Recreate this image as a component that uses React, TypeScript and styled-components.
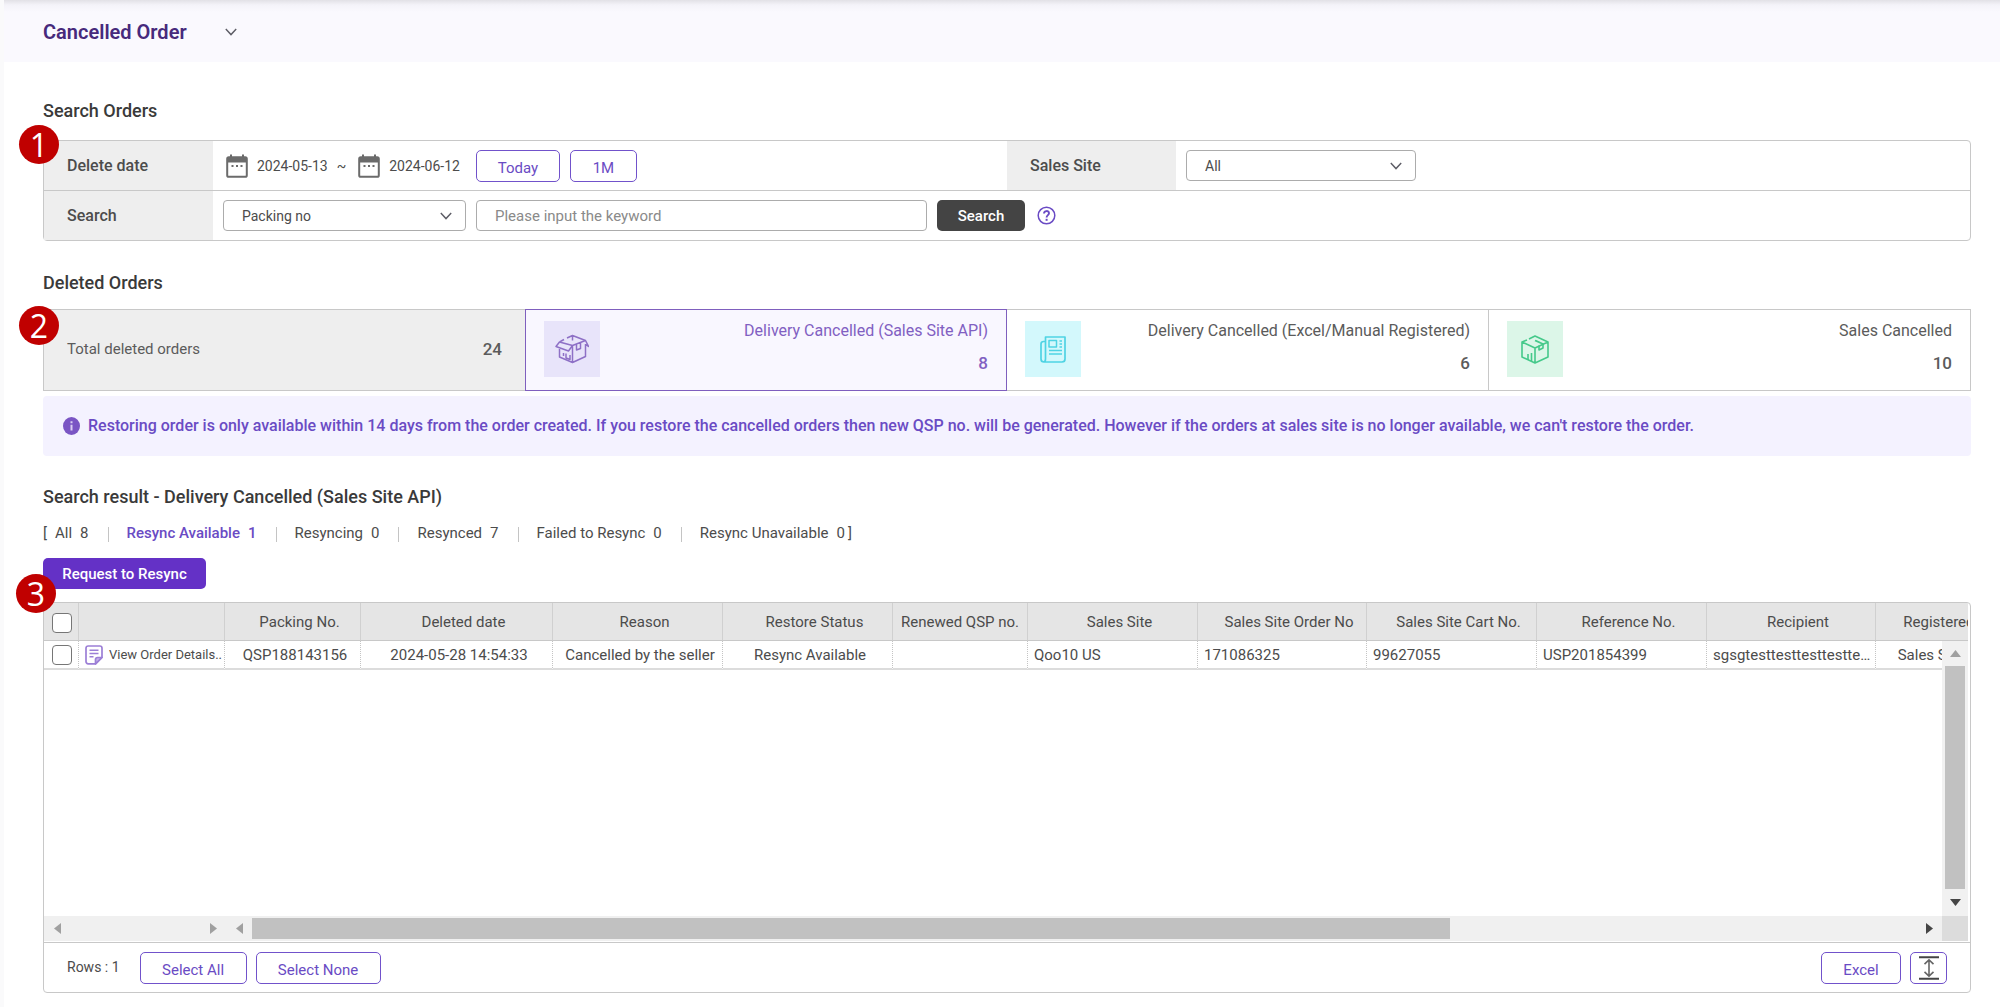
import React from 'react';
import styled, { createGlobalStyle, css } from 'styled-components';

const color = {
  purple: '#6a4bc4',
  purpleDark: '#6431c6',
  text: '#4c4c4c',
  heading: '#3a3a3a',
  line: '#c8c8c8',
  label: '#eeeeee',
};

const GlobalStyle = createGlobalStyle`
  *, *::before, *::after { box-sizing: border-box; }
  body { margin: 0; background: #fff; }
  body, button, input, select { font-family: Roboto, "Liberation Sans", sans-serif; }
  h1, h2, p { margin: 0; }
  svg { flex: none; }
`;

const Page = styled.div`
  min-height: 100vh;
  border-left: 4px solid #fafafb;
  color: ${color.text};
  font-size: 15px;
  line-height: 20px;
`;

const Header = styled.header`
  display: flex;
  align-items: center;
  gap: 36px;
  height: 62px;
  padding: 2px 39px 0;
  background: linear-gradient(#e2e1e6, #f4f3f9 5px, #faf9fe 12px);
`;

const Title = styled.h1`
  color: #472a7c;
  font-size: 20px;
  font-weight: 600;
  line-height: 28px;
`;

const PlainButton = styled.button`
  display: flex;
  padding: 0 2px;
  border: 0;
  background: none;
  color: ${color.purple};
`;

const Main = styled.main`
  padding: 0 29px 0 39px;
`;

const Section = styled.section<{ $gap: number }>`
  padding-top: ${(p) => p.$gap}px;
`;

const SectionTitle = styled.h2`
  color: ${color.heading};
  font-size: 18px;
  font-weight: 500;
  line-height: 24px;
`;

const Panel = styled.div<{ $gap: number }>`
  position: relative;
  margin-top: ${(p) => p.$gap}px;
  border: 1px solid ${color.line};
  border-radius: 4px;
`;

const StepBadge = styled.span<{ $left: number; $top: number }>`
  position: absolute;
  z-index: 2;
  left: ${(p) => p.$left}px;
  top: ${(p) => p.$top}px;
  display: grid;
  place-items: center;
  width: 40px;
  height: 39px;
  border-radius: 50%;
  background: #c00000;
  color: #fff;
  font: 400 32px/40px "Open Sans", "Noto Sans", sans-serif;
`;

const FilterRow = styled.div`
  display: grid;
  grid-template-columns: 169px 1fr;
  min-height: 49px;
`;

const FilterSplit = styled.div`
  display: grid;
  grid-template-columns: 1fr 1fr;
  border-bottom: 1px solid ${color.line};
`;

const FilterLabel = styled.label`
  display: flex;
  align-items: center;
  padding-left: 23px;
  background: ${color.label};
  font-size: 16px;
  font-weight: 500;
`;

const FilterField = styled.div<{ $wide?: boolean }>`
  display: flex;
  align-items: center;
  gap: 10px;
  padding-left: ${(p) => (p.$wide ? 13 : 10)}px;
`;

const DateGroup = styled.div`
  display: flex;
  align-items: center;
  gap: 9px;
  padding-right: 2px;
  font-size: 14px;
  &:last-of-type { padding-right: 6px; }
`;

const field = css`
  height: 31px;
  border: 1px solid #acacac;
  border-radius: 4px;
  background: #fff;
  color: ${color.text};
`;

const SelectWrap = styled.div<{ $width: number }>`
  display: grid;
  grid-template-columns: 1fr;
  align-items: center;
  width: ${(p) => p.$width}px;
  & > * { grid-area: 1 / 1; }
  & > svg { justify-self: end; margin-right: 14px; pointer-events: none; }
`;

const Select = styled.select`
  ${field}
  width: 100%;
  padding: 0 32px 0 18px;
  font-size: 14px;
  appearance: none;
`;

const TextInput = styled.input`
  ${field}
  width: 451px;
  padding: 0 18px;
  font-size: 15px;
  &::placeholder { color: #8a8a8a; opacity: 1; }
`;

const OutlineButton = styled.button<{ $width: number }>`
  display: grid;
  place-items: center;
  width: ${(p) => p.$width}px;
  height: 32px;
  padding: 4px 0 0;
  border: 1px solid #7152cb;
  border-radius: 5px;
  background: #fff;
  color: ${color.purple};
  font-size: 15px;
  line-height: 20px;
`;

const IconButton = styled(OutlineButton)`
  padding: 0;
  color: #4a4a4a;
`;

const SolidButton = styled.button<{ $width: number; $dark?: boolean }>`
  display: block;
  width: ${(p) => p.$width}px;
  height: 31px;
  padding: 0;
  border: 0;
  border-radius: 5px;
  background: ${(p) => (p.$dark ? '#444444' : color.purpleDark)};
  color: #fff;
  font-size: 15px;
  font-weight: 500;
`;

const Cards = styled.div`
  position: relative;
  display: grid;
  grid-template-columns: repeat(4, 1fr);
  margin-top: 14px;
`;

const Card = styled.button<{ $state?: 'total' | 'active' }>`
  display: flex;
  align-items: ${(p) => (p.$state === 'total' ? 'center' : 'stretch')};
  justify-content: space-between;
  height: 82px;
  padding: ${(p) => (p.$state === 'total' ? '0 23px 2px' : '11px 18px')};
  border: 1px solid ${(p) => (p.$state === 'active' ? '#7f5fbe' : color.line)};
  border-left-width: ${(p) => (p.$state ? 1 : 0)}px;
  border-right-width: ${(p) => (p.$state === 'total' ? 0 : 1)}px;
  background: ${(p) => (p.$state === 'total' ? color.label : p.$state === 'active' ? '#f9f7ff' : '#fff')};
  color: ${(p) => (p.$state === 'active' ? '#8160c2' : '#5b5b5b')};
  font-size: ${(p) => (p.$state === 'total' ? 15 : 16)}px;
  line-height: 20px;
`;

const CardTile = styled.span<{ $bg: string }>`
  display: grid;
  place-items: center;
  width: 56px;
  height: 56px;
  background: ${(p) => p.$bg};
`;

const CardText = styled.span`
  display: flex;
  flex-direction: column;
  align-items: flex-end;
  gap: 12px;
`;

const CardCount = styled.strong`
  font-size: 17px;
  font-weight: 500;
  line-height: 20px;
`;

const Notice = styled.p`
  display: flex;
  align-items: center;
  gap: 8px;
  min-height: 60px;
  margin-top: 5px;
  padding: 0 20px;
  border-radius: 4px;
  background: #f4f2ff;
  color: ${color.purple};
  font-size: 16px;
  font-weight: 500;
`;

const StatusTabs = styled.nav`
  display: flex;
  align-items: center;
  margin: 14px 0 15px;
`;

const StatusTab = styled.button<{ $active?: boolean }>`
  display: flex;
  gap: 8px;
  padding: 0;
  border: 0;
  background: none;
  color: ${(p) => (p.$active ? color.purple : color.text)};
  font-size: 15px;
  font-weight: ${(p) => (p.$active ? 500 : 400)};
  line-height: 20px;
`;

const Bracket = styled.span<{ $open?: boolean }>`
  padding: ${(p) => (p.$open ? '0 8px 0 0' : '0 0 0 3px')};
`;

const Divider = styled.span`
  width: 1px;
  height: 15px;
  margin: 2px 18px 0 19px;
  background: #c4c4c4;
`;

const GridView = styled.div`
  position: relative;
  height: 313px;
  margin-right: 2px;
  overflow: hidden;
`;

const Table = styled.table`
  width: 1990px;
  border-collapse: separate;
  border-spacing: 0;
  table-layout: fixed;
`;

const HeadCell = styled.th<{ $tight?: boolean }>`
  height: 38px;
  padding: 0 0 0 ${(p) => (p.$tight ? 0 : 14)}px;
  border-right: 1px solid #d0d0d0;
  border-bottom: 1px solid ${color.line};
  background: #e5e5e5;
  font-size: 15px;
  font-weight: 400;
  white-space: nowrap;
`;

const Cell = styled.td<{ $left?: boolean }>`
  height: 29px;
  padding: 0 1px 0 6px;
  border-right: 1px dotted #c4c4c4;
  border-bottom: 2px solid #dcdcdc;
  overflow: hidden;
  font-size: 15px;
  text-align: ${(p) => (p.$left ? 'left' : 'center')};
  text-overflow: ellipsis;
  white-space: nowrap;
`;

const DetailsLink = styled.a`
  display: flex;
  align-items: center;
  gap: 6px;
  color: ${color.text};
  font-size: 13px;
  text-decoration: none;
`;

const Check = styled.input`
  display: block;
  width: 20px;
  height: 20px;
  margin: 0 0 0 2px;
  border: 1px solid #767676;
  border-radius: 4px;
  background: #fff;
  appearance: none;
`;

const HeadCheck = styled(Check)`
  margin: 3px 0 0 8px;
`;

const VerticalBar = styled.div`
  position: absolute;
  top: 38px;
  right: 0;
  bottom: 0;
  display: flex;
  flex-direction: column;
  align-items: center;
  width: 26px;
  background: #f1f1f1;
`;

const ScrollButton = styled.button<{ $size: number }>`
  display: grid;
  flex: none;
  place-items: center;
  width: 26px;
  height: ${(p) => p.$size}px;
  padding: 0;
  border: 0;
  background: none;
`;

const VerticalThumb = styled.div`
  flex: 1;
  width: 20px;
  background: #c1c1c1;
`;

const HorizontalBars = styled.div`
  display: flex;
  align-items: center;
  height: 25px;
  margin-right: 2px;
  background: #f0f0f0;
`;

const FixedBar = styled.div`
  display: flex;
  flex: none;
  justify-content: space-between;
  width: 182px;
`;

const Track = styled.div`
  flex: 1;
`;

const HorizontalThumb = styled.div`
  width: 72%;
  height: 21px;
  background: #c1c1c1;
`;

const Corner = styled.div`
  width: 26px;
  height: 25px;
  background: #dcdcdc;
`;

const GridFooter = styled.footer`
  display: flex;
  align-items: center;
  gap: 9px;
  height: 50px;
  margin-top: 1px;
  padding: 0 23px;
  border-top: 1px solid ${color.line};
`;

const RowCount = styled.span`
  margin-right: 11px;
  padding-bottom: 2px;
  font-size: 14px;
`;

const Spacer = styled.span`
  flex: 1;
`;

const Chevron = () => (
  <svg width="12" height="8" viewBox="0 0 12 8" fill="none" stroke="#5d5d66" strokeWidth="1.4">
    <path d="M0.8 1 6 6.6 11.2 1" />
  </svg>
);

const CalendarIcon = () => (
  <svg width="22" height="24" viewBox="0 0 22 24" fill="none" stroke="#6b6b6b">
    <path d="M5 0.5v4M17 0.5v4" strokeWidth="2" />
    <rect x="1.2" y="3.2" width="19.6" height="19.6" rx="1.6" strokeWidth="2" />
    <path d="M1 4h20v4.5H1z" fill="#6b6b6b" stroke="none" />
    <path d="M5.5 12h2M10 12h2M14.5 12h2" strokeWidth="2" />
  </svg>
);

const HelpIcon = () => (
  <svg width="19" height="19" viewBox="0 0 19 19" fill="none" stroke="#6a4bc4">
    <circle cx="9.5" cy="9.5" r="8.3" strokeWidth="1.5" />
    <path d="M7 7.5c0-3.2 5-3.2 5-.2 0 1.8-2.4 1.9-2.4 4.1" strokeWidth="1.9" />
    <path d="M9.6 12.8v2" strokeWidth="2" />
  </svg>
);

const InfoIcon = () => (
  <svg width="17" height="18" viewBox="0 0 17 18">
    <ellipse cx="8.5" cy="9" rx="8.5" ry="9" fill="#7a55c4" />
    <path d="M8.5 4.2v2M8.5 7.8v5.8" stroke="#d9cdf2" strokeWidth="2" />
  </svg>
);

const OpenBoxIcon = () => (
  <svg width="34" height="30" viewBox="0 0 34 30" fill="none" stroke="#8e70c6" strokeWidth="1.5" strokeLinejoin="round">
    <path d="M4.5 15v8L17.5 28.5l13-6V10M17.5 28.5V11.5M4.5 8 1 12.5l12.5 4.5 4-5.5L4.5 8M17.5 11.5 30.5 6.5M4.5 8l4.5-2.5M12 4l5.5-2.500 13 5 3 6-3-2M17.500 1.500v5M21.500 10.500V16l4-1.500V9" />
    <path d="M11 19.500v4.500l4 1.500v-4.500M8.500 19v3" />
  </svg>
);

const NewsIcon = () => (
  <svg width="26" height="27" viewBox="0 0 26 27" fill="none" stroke="#4fd3e3" strokeWidth="1.7" strokeLinejoin="round">
    <path d="M5.5 5.5H3.5C2 5.5 1 6.5 1 8V23c0 2 1.2 3 3 3h18c1.8 0 3-1.2 3-3V1H5.5v22c0 2-1 3-2 3" />
    <path d="M9 4.5h7.5v6.5H9zM19.5 5h2.5M19.5 8h2.5M19.5 11h2.5M9 14.5h13M9 18h13" strokeWidth="1.5" />
  </svg>
);

const ClosedBoxIcon = () => (
  <svg width="28" height="29" viewBox="0 0 28 29" fill="none" stroke="#45c98a" strokeWidth="1.6" strokeLinejoin="round">
    <path d="M1 7v15l13 6 13-6V7L14 1 8 4M6 5 1 7l13 6 13-6M14 13v15" />
    <path d="M14 5.5l8 3.5M18 10.5v4.5l4-2V9L14.5 5.5M7 19v6M10.5 18v8" />
  </svg>
);

const NoteIcon = () => (
  <svg width="18" height="20" viewBox="0 0 18 20" fill="none" stroke="#9c7fd6" strokeWidth="1.7" strokeLinejoin="round">
    <path d="M10.5 18.8H3.2c-1.3 0-2.2-.9-2.2-2.2V3.2C1 1.900 1.900 1 3.200 1h11.600c1.300 0 2.200.9 2.200 2.200v9.300z" />
    <path d="M10.5 18.8v-4.200c0-1.300.8-2.100 2.100-2.100H17z" fill="#c5b2ea" />
    <path d="M4.5 5.2h9M4.5 8.5h9M4.5 11.8h4" strokeWidth="1.5" />
  </svg>
);

const HeightIcon = () => (
  <svg width="20" height="24" viewBox="0 0 20 24" fill="none" stroke="#444" strokeWidth="2">
    <path d="M0 1.2h20M0 22.8h20" />
    <path d="M10 4v16M5.5 8.2 10 3.9l4.5 4.3M5.5 15.8l4.5 4.3 4.5-4.3" strokeWidth="1.6" stroke="#666" />
  </svg>
);

const arrows = {
  up: 'M0 7 5.5 0 11 7z',
  down: 'M0 0h11L5.5 7z',
  left: 'M7 0v11L0 5.5z',
  right: 'M0 0v11l7-5.5z',
};

const Arrow = ({ dir, dark }: { dir: keyof typeof arrows; dark?: boolean }) => {
  const tall = dir === 'left' || dir === 'right';
  return (
    <svg width={tall ? 7 : 11} height={tall ? 11 : 7}>
      <path d={arrows[dir]} fill={dark ? '#454545' : '#a0a0a0'} />
    </svg>
  );
};

const columns = [
  { title: 'Packing No.', width: 136, value: 'QSP188143156' },
  { title: 'Deleted date', width: 192, value: '2024-05-28 14:54:33' },
  { title: 'Reason', width: 170, value: 'Cancelled by the seller' },
  { title: 'Restore Status', width: 170, value: 'Resync Available' },
  { title: 'Renewed QSP no.', width: 135, value: '', tight: true },
  { title: 'Sales Site', width: 170, value: 'Qoo10 US', left: true },
  { title: 'Sales Site Order No', width: 169, value: '171086325', left: true },
  { title: 'Sales Site Cart No.', width: 170, value: '99627055', left: true },
  { title: 'Reference No.', width: 170, value: 'USP201854399', left: true },
  { title: 'Recipient', width: 169, value: 'sgsgtesttesttesttesttesttest', left: true },
  { title: 'Registered by', width: 132, value: 'Sales Site API' },
];

const statuses = [
  { name: 'All', count: 8 },
  { name: 'Resync Available', count: 1 },
  { name: 'Resyncing', count: 0 },
  { name: 'Resynced', count: 7 },
  { name: 'Failed to Resync', count: 0 },
  { name: 'Resync Unavailable', count: 0 },
];

const cards = [
  { name: 'Delivery Cancelled (Sales Site API)', count: 8, bg: '#e8e4fa', icon: <OpenBoxIcon />, active: true },
  { name: 'Delivery Cancelled (Excel/Manual Registered)', count: 6, bg: '#d3f8fc', icon: <NewsIcon /> },
  { name: 'Sales Cancelled', count: 10, bg: '#dcf6e8', icon: <ClosedBoxIcon /> },
];

export default function App() {
  return (
    <Page>
      <GlobalStyle />
      <Header>
        <Title>Cancelled Order</Title>
        <PlainButton aria-label="Change menu"><Chevron /></PlainButton>
      </Header>
      <Main>
        <Section $gap={37}>
          <SectionTitle>Search Orders</SectionTitle>
          <Panel $gap={17}>
            <StepBadge $left={-25} $top={-16}>1</StepBadge>
            <FilterSplit>
              <FilterRow>
                <FilterLabel as="div">Delete date</FilterLabel>
                <FilterField $wide>
                  <DateGroup>
                    <CalendarIcon />
                    <span>2024-05-13</span>
                    <span>~</span>
                  </DateGroup>
                  <DateGroup>
                    <CalendarIcon />
                    <span>2024-06-12</span>
                  </DateGroup>
                  <OutlineButton $width={84}>Today</OutlineButton>
                  <OutlineButton $width={67}>1M</OutlineButton>
                </FilterField>
              </FilterRow>
              <FilterRow>
                <FilterLabel htmlFor="site">Sales Site</FilterLabel>
                <FilterField>
                  <SelectWrap $width={230}>
                    <Select id="site"><option>All</option></Select>
                    <Chevron />
                  </SelectWrap>
                </FilterField>
              </FilterRow>
            </FilterSplit>
            <FilterRow>
              <FilterLabel htmlFor="keyword">Search</FilterLabel>
              <FilterField>
                <SelectWrap $width={243}>
                  <Select aria-label="Search by"><option>Packing no</option></Select>
                  <Chevron />
                </SelectWrap>
                <TextInput id="keyword" placeholder="Please input the keyword" />
                <SolidButton $width={88} $dark>Search</SolidButton>
                <PlainButton aria-label="Help"><HelpIcon /></PlainButton>
              </FilterField>
            </FilterRow>
          </Panel>
        </Section>

        <Section $gap={30}>
          <SectionTitle>Deleted Orders</SectionTitle>
          <Cards>
            <StepBadge $left={-24} $top={-3}>2</StepBadge>
            <Card $state="total">
              <span>Total deleted orders</span>
              <CardCount>24</CardCount>
            </Card>
            {cards.map((c) => (
              <Card key={c.name} $state={c.active ? 'active' : undefined}>
                <CardTile $bg={c.bg}>{c.icon}</CardTile>
                <CardText>
                  <span>{c.name}</span>
                  <CardCount>{c.count}</CardCount>
                </CardText>
              </Card>
            ))}
          </Cards>
          <Notice>
            <InfoIcon />
            Restoring order is only available within 14 days from the order created. If you restore the cancelled orders then new QSP no. will be generated. However if the orders at sales site is no longer available, we can't restore the order.
          </Notice>
        </Section>

        <Section $gap={29}>
          <SectionTitle>Search result - Delivery Cancelled (Sales Site API)</SectionTitle>
          <StatusTabs>
            <Bracket $open>[</Bracket>
            {statuses.map((s, i) => (
              <React.Fragment key={s.name}>
                {i > 0 && <Divider />}
                <StatusTab $active={i === 1}>
                  <span>{s.name}</span>
                  <span>{s.count}</span>
                </StatusTab>
              </React.Fragment>
            ))}
            <Bracket>]</Bracket>
          </StatusTabs>
          <SolidButton $width={163}>Request to Resync</SolidButton>
          <Panel $gap={13}>
            <StepBadge $left={-28} $top={-29}>3</StepBadge>
            <GridView>
              <Table>
                <colgroup>
                  <col style={{ width: 35 }} />
                  <col style={{ width: 146 }} />
                  {columns.map((c) => <col key={c.title} style={{ width: c.width }} />)}
                  <col />
                </colgroup>
                <thead>
                  <tr>
                    <HeadCell $tight><HeadCheck type="checkbox" aria-label="Select all rows" /></HeadCell>
                    <HeadCell />
                    {columns.map((c) => <HeadCell key={c.title} $tight={c.tight}>{c.title}</HeadCell>)}
                    <HeadCell />
                  </tr>
                </thead>
                <tbody>
                  <tr>
                    <Cell><Check type="checkbox" aria-label="Select row" /></Cell>
                    <Cell $left>
                      <DetailsLink href="#details"><NoteIcon />View Order Details..</DetailsLink>
                    </Cell>
                    {columns.map((c) => <Cell key={c.title} $left={c.left}>{c.value}</Cell>)}
                    <Cell />
                  </tr>
                </tbody>
              </Table>
              <VerticalBar>
                <ScrollButton $size={25} aria-label="Scroll up"><Arrow dir="up" /></ScrollButton>
                <VerticalThumb />
                <ScrollButton $size={27} aria-label="Scroll down"><Arrow dir="down" dark /></ScrollButton>
              </VerticalBar>
            </GridView>
            <HorizontalBars>
              <FixedBar>
                <ScrollButton $size={25} aria-label="Scroll fixed columns left"><Arrow dir="left" /></ScrollButton>
                <ScrollButton $size={25} aria-label="Scroll fixed columns right"><Arrow dir="right" /></ScrollButton>
              </FixedBar>
              <ScrollButton $size={25} aria-label="Scroll left"><Arrow dir="left" /></ScrollButton>
              <Track><HorizontalThumb /></Track>
              <ScrollButton $size={25} aria-label="Scroll right"><Arrow dir="right" dark /></ScrollButton>
              <Corner />
            </HorizontalBars>
            <GridFooter>
              <RowCount>Rows : 1</RowCount>
              <OutlineButton $width={107}>Select All</OutlineButton>
              <OutlineButton $width={125}>Select None</OutlineButton>
              <Spacer />
              <OutlineButton $width={80}>Excel</OutlineButton>
              <IconButton $width={37} aria-label="Resize grid height"><HeightIcon /></IconButton>
            </GridFooter>
          </Panel>
        </Section>
      </Main>
    </Page>
  );
}
